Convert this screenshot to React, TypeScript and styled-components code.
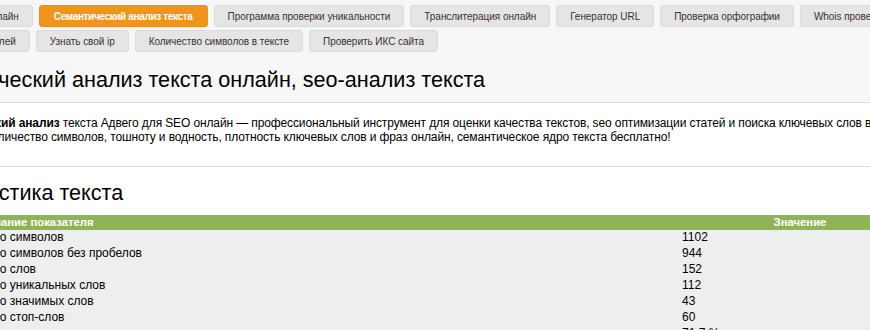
import React from 'react';
import styled, { createGlobalStyle } from 'styled-components';

const GlobalStyle = createGlobalStyle`
  body {
    margin: 0;
    background: #ffffff;
    font-family: "Liberation Sans", Arial, sans-serif;
    color: #000;
    overflow: hidden;
  }
`;

const Viewport = styled.div`
  width: 870px;
  height: 330px;
  overflow: hidden;
`;

// page is scrolled sideways in the screenshot, so the content starts left of the frame
const Page = styled.div`
  margin-left: -100px;
  width: 1240px;
`;

const TopSection = styled.div`
  background: #f7f7f7;
  border-bottom: 1px solid #dcdcdc;
  padding-top: 5px;
`;

const ToolNav = styled.nav`
  display: flex;
  flex-direction: column;
  gap: 3px;
`;

const ToolRow = styled.div<{ $indent: number }>`
  display: flex;
  gap: 6px;
  margin-left: ${p => p.$indent}px;
`;

const ToolTab = styled.a<{ $active?: boolean }>`
  display: flex;
  align-items: center;
  height: 22px;
  box-sizing: border-box;
  padding: 0 ${p => (p.$active ? 14 : 13)}px;
  border-radius: 3px;
  border: 1px solid ${p => (p.$active ? '#e8901a' : '#dbdbdb')};
  background: ${p => (p.$active ? '#ef951b' : '#e5e5e5')};
  color: ${p => (p.$active ? '#ffffff' : '#3a3030')};
  font-size: 10px;
  font-weight: ${p => (p.$active ? 700 : 400)};
  letter-spacing: ${p => (p.$active ? '-0.35px' : '-0.05px')};
  white-space: nowrap;
  text-decoration: none;
  cursor: pointer;
`;

const PageTitle = styled.h1`
  margin: 15px 0 0;
  padding: 0 0 9px 10px;
  font-size: 21.6px;
  line-height: 26px;
  font-weight: 400;
  white-space: nowrap;
`;

const Intro = styled.section`
  padding: 13px 0 22px 25px;
  border-bottom: 1px solid #dcdcdc;
`;

const IntroText = styled.p`
  margin: 0;
  width: 1100px;
  font-size: 12px;
  line-height: 14px;
  letter-spacing: -0.12px;
`;

const Stats = styled.section`
  padding-top: 13px;
`;

const SectionTitle = styled.h2`
  margin: 0 0 9px;
  padding-left: 40px;
  font-size: 21.6px;
  line-height: 26px;
  font-weight: 400;
`;

const StatsTable = styled.table`
  width: 1022px;
  border-collapse: collapse;
  font-size: 12px;
`;

const HeadCell = styled.th<{ $align: 'left' | 'center' }>`
  background: #8fb458;
  color: #ffffff;
  font-size: 11.3px;
  font-weight: 700;
  height: 15px;
  padding: 0 0 0 ${p => (p.$align === 'left' ? '74px' : '0')};
  line-height: 15px;
  text-align: ${p => p.$align};
`;

const Cell = styled.td<{ $value?: boolean }>`
  background: #eeeeee;
  height: 16px;
  padding: 0 0 0 ${p => (p.$value ? '4px' : '42px')};
  line-height: 15.6px;
  width: ${p => (p.$value ? '240px' : 'auto')};
  white-space: nowrap;
`;

const firstRow = [
  { title: 'Антиплагиат онлайн' },
  { title: 'Семантический анализ текста', active: true },
  { title: 'Программа проверки уникальности' },
  { title: 'Транслитерация онлайн' },
  { title: 'Генератор URL' },
  { title: 'Проверка орфографии' },
  { title: 'Whois проверка домена' },
];

const secondRow = [
  { title: 'Генератор паролей' },
  { title: 'Узнать свой ip' },
  { title: 'Количество символов в тексте' },
  { title: 'Проверить ИКС сайта' },
];

const stats = [
  ['Количество символов', '1102'],
  ['Количество символов без пробелов', '944'],
  ['Количество слов', '152'],
  ['Количество уникальных слов', '112'],
  ['Количество значимых слов', '43'],
  ['Количество стоп-слов', '60'],
  ['Вода', '71.7 %'],
  ['Классическая тошнота документа', '3.16'],
];

export default function App() {
  return (
    <Viewport>
      <GlobalStyle />
      <Page>
        <TopSection>
          <ToolNav>
            <ToolRow $indent={11}>
              {firstRow.map(t => (
                <ToolTab key={t.title} $active={t.active}>{t.title}</ToolTab>
              ))}
            </ToolRow>
            <ToolRow $indent={13}>
              {secondRow.map(t => (
                <ToolTab key={t.title}>{t.title}</ToolTab>
              ))}
            </ToolRow>
          </ToolNav>
          <PageTitle>Семантический анализ текста онлайн, seo-анализ текста</PageTitle>
        </TopSection>

        <Intro>
          <IntroText>
            <b>Семантический анализ</b> текста Адвего для SEO онлайн — профессиональный инструмент для оценки качества текстов, seo оптимизации статей и поиска ключевых слов в тексте.
            <br />
            Проверьте количество символов, тошноту и водность, плотность ключевых слов и фраз онлайн, семантическое ядро текста бесплатно!
          </IntroText>
        </Intro>

        <Stats>
          <SectionTitle>Статистика текста</SectionTitle>
          <StatsTable>
            <thead>
              <tr>
                <HeadCell $align="left">Название показателя</HeadCell>
                <HeadCell $align="center">Значение</HeadCell>
              </tr>
            </thead>
            <tbody>
              {stats.map(([name, value]) => (
                <tr key={name}>
                  <Cell>{name}</Cell>
                  <Cell $value>{value}</Cell>
                </tr>
              ))}
            </tbody>
          </StatsTable>
        </Stats>
      </Page>
    </Viewport>
  );
}
